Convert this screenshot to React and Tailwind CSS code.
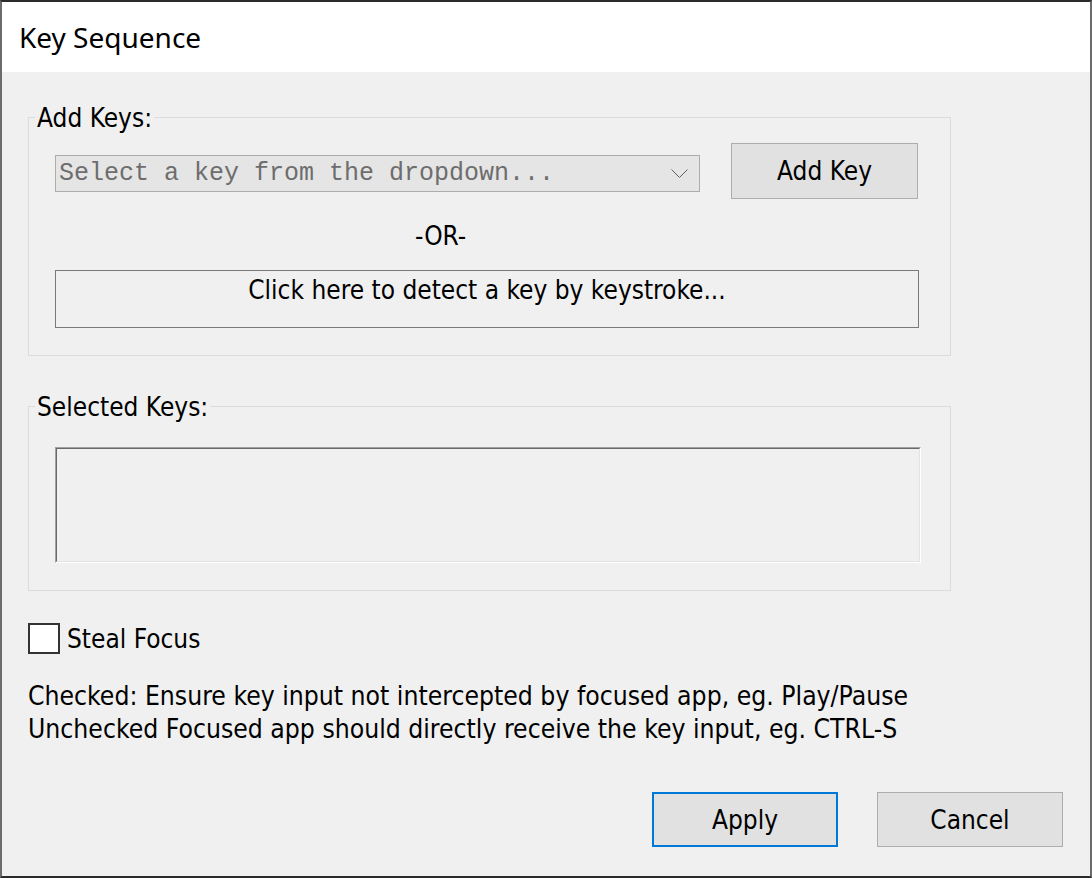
import React from "react";

const body = { fontFamily: '"DejaVu Sans Condensed", "DejaVu Sans", sans-serif' };

function GroupBox({ label, className, children }) {
  return (
    <div className={"relative w-[923px] border border-[#dcdcdc] pl-[26px] " + className}>
      <span className="absolute left-[6px] top-[-13px] px-[2px] bg-[#f0f0f0] text-[26px] leading-none text-black whitespace-nowrap">
        {label}
      </span>
      {children}
    </div>
  );
}

export default function App() {
  return (
    <div
      className="w-[1092px] h-[878px] box-border flex flex-col bg-[#f0f0f0] border-t-2 border-b-2 border-l-2 border-r-2 border-t-[#2b2b2b] border-b-[#2b2b2b] border-l-[#6b6b6b] border-r-[#6b6b6b] overflow-hidden"
      style={body}
    >
      <div className="h-[70px] shrink-0 bg-white flex items-center pl-[17px]">
        <span
          className="text-[28px] leading-none text-black"
          style={{ fontFamily: '"Noto Sans", "Open Sans", sans-serif' }}
        >
          Key Sequence
        </span>
      </div>

      <div className="flex-1 flex flex-col pl-[26px] text-black">
        <GroupBox label="Add Keys:" className="mt-[45px] h-[239px] pt-[25px]">
          <div className="flex items-start">
            <div className="mt-[12px] w-[645px] h-[37px] border border-[#acacac] bg-[#e5e5e5] flex items-center justify-between pl-[3px] pr-[11px]">
              <span
                className="text-[25px] leading-none text-[#6d6d6d] whitespace-nowrap"
                style={{ fontFamily: '"Liberation Mono", monospace' }}
              >
                Select a key from the dropdown...
              </span>
              <svg width="17" height="9" viewBox="0 0 17 9" className="shrink-0">
                <polyline points="0.5,0.5 8.5,8.5 16.5,0.5" fill="none" stroke="#606060" strokeWidth="1" />
              </svg>
            </div>
            <div className="ml-[31px] w-[187px] h-[56px] border border-[#adadad] bg-[#e1e1e1] flex items-center justify-center text-[26px] leading-none">
              Add Key
            </div>
          </div>
          <div className="mt-[24px] ml-[360px] text-[26px] leading-none">-OR-</div>
          <div className="mt-[21px] w-[864px] h-[58px] border border-[#7a7a7a] flex justify-center pt-[6px] text-[26px] leading-none">
            Click here to detect a key by keystroke...
          </div>
        </GroupBox>

        <GroupBox label="Selected Keys:" className="mt-[50px] h-[185px] pt-[40px]">
          <div className="w-[866px] h-[116px] border-t border-l border-t-[#a0a0a0] border-l-[#a0a0a0] border-b border-r border-b-white border-r-white">
            <div className="w-full h-full border-t border-l border-t-[#696969] border-l-[#696969] border-b border-r border-b-[#e3e3e3] border-r-[#e3e3e3]"></div>
          </div>
        </GroupBox>

        <div className="mt-[32px] flex items-center">
          <div className="w-[32px] h-[31px] border-2 border-[#333333] bg-white"></div>
          <span className="ml-[7px] text-[26px] leading-none">Steal Focus</span>
        </div>

        <div className="mt-[26px] text-[26.3px] leading-[33px] whitespace-nowrap">
          <div>Checked: Ensure key input not intercepted by focused app, eg. Play/Pause</div>
          <div>Unchecked Focused app should directly receive the key input, eg. CTRL-S</div>
        </div>

        <div className="mt-[46px] flex justify-end pr-[27px]">
          <div className="w-[186px] h-[55px] border-2 border-[#0078d7] bg-[#e1e1e1] flex items-center justify-center text-[26px] leading-none">
            Apply
          </div>
          <div className="ml-[39px] w-[186px] h-[55px] border border-[#adadad] bg-[#e1e1e1] flex items-center justify-center text-[26px] leading-none">
            Cancel
          </div>
        </div>
      </div>
    </div>
  );
}
